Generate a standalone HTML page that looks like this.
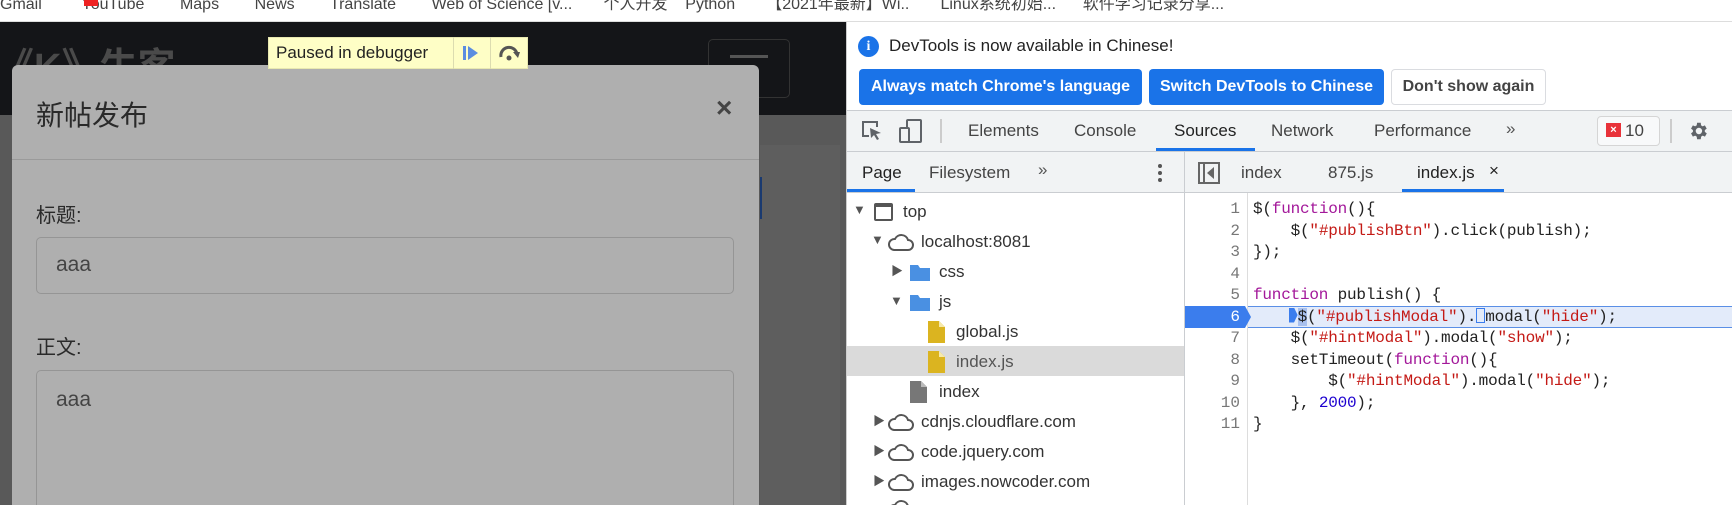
<!DOCTYPE html>
<html style="overflow:hidden;height:505px"><head><meta charset="utf-8">
<style>
*{box-sizing:border-box;margin:0;padding:0}
body{width:1732px;height:505px;overflow:hidden;position:relative;background:#fff;font-family:"Liberation Sans","Noto Sans CJK SC",sans-serif}
.a{position:absolute}
.t{position:absolute;white-space:nowrap}
.dt{font-size:17px;color:#333}
.code{font-family:"Liberation Mono",monospace;font-size:16px;color:#222;letter-spacing:-0.2px}
.k{color:#a3189a}.s{color:#c41a16}.n{color:#1c00cf}
.ln{font-family:"Liberation Mono",monospace;font-size:16px;color:#777;text-align:right;width:40px}
</style></head><body>
<!-- bookmark bar -->
<div class="a" style="left:0;top:0;width:1732px;height:22px;background:#fff;border-bottom:1px solid #ddd"></div>
<div class="t" style="left:0;top:-10px;font-size:16px;color:#444">Gmail &nbsp;&nbsp;&nbsp;&nbsp;&nbsp;&nbsp;&nbsp; YouTube &nbsp;&nbsp;&nbsp;&nbsp;&nbsp;&nbsp; Maps &nbsp;&nbsp;&nbsp;&nbsp;&nbsp;&nbsp; News &nbsp;&nbsp;&nbsp;&nbsp;&nbsp;&nbsp; Translate &nbsp;&nbsp;&nbsp;&nbsp;&nbsp;&nbsp; Web of Science [v... &nbsp;&nbsp;&nbsp;&nbsp;&nbsp; 个人开发 &nbsp;&nbsp; Python &nbsp;&nbsp;&nbsp;&nbsp;&nbsp; 【2021年最新】Wi.. &nbsp;&nbsp;&nbsp;&nbsp;&nbsp; Linux系统初始... &nbsp;&nbsp;&nbsp;&nbsp; 软件学习记录分享...</div>
<div class="a" style="left:84px;top:0;width:14px;height:6px;background:#e22"></div>

<!-- left page -->
<div class="a" style="left:0;top:22px;width:846px;height:483px;background:#595959"></div>
<div class="a" style="left:0;top:22px;width:846px;height:93px;background:#141518"></div>
<div class="t" style="left:-4px;top:36px;font-size:38px;color:#4a4a4a;font-weight:bold">《K》牛客</div>
<div class="a" style="left:708px;top:39px;width:82px;height:59px;border:1px solid #333;border-radius:5px"></div>
<div class="a" style="left:730px;top:55px;width:38px;height:3px;background:#555"></div>
<div class="a" style="left:760px;top:145px;width:80px;height:360px;background:#5e5e5e"></div>
<div class="a" style="left:760px;top:177px;width:2px;height:42px;background:#1a3a70"></div>
<!-- modal -->
<div class="a" style="left:12px;top:65px;width:747px;height:440px;background:#afafaf;border-radius:6px 6px 0 0"></div>
<div class="a" style="left:12px;top:159px;width:747px;height:1px;background:#9a9a9a"></div>
<div class="t" style="left:36px;top:94px;font-size:28px;color:#2a2a2a">新帖发布</div>
<div class="t" style="left:716px;top:92px;font-size:28px;font-weight:bold;color:#444">×</div>
<div class="t" style="left:36px;top:199px;font-size:20px;color:#2a2a2a">标题:</div>
<div class="a" style="left:36px;top:237px;width:698px;height:57px;border:1px solid #959595;border-radius:5px"></div>
<div class="t" style="left:56px;top:253px;font-size:21px;color:#444">aaa</div>
<div class="t" style="left:36px;top:331px;font-size:20px;color:#2a2a2a">正文:</div>
<div class="a" style="left:36px;top:370px;width:698px;height:135px;border:1px solid #959595;border-bottom:none;border-radius:5px 5px 0 0"></div>
<div class="t" style="left:56px;top:388px;font-size:21px;color:#444">aaa</div>
<!-- paused -->
<div class="a" style="left:268px;top:37px;width:260px;height:32px;background:#fefec6;border:1px solid #e8e8b0"></div>
<div class="t" style="left:276px;top:43px;font-size:17px;color:#222">Paused in debugger</div>
<div class="a" style="left:453px;top:37px;width:1px;height:32px;background:#dcdcb0"></div>
<div class="a" style="left:490px;top:37px;width:1px;height:32px;background:#dcdcb0"></div>
<div class="a" style="left:463px;top:46px;width:3px;height:14px;background:#5b8de0"></div>
<div class="a" style="left:468px;top:46px;width:0;height:0;border-top:7px solid transparent;border-bottom:7px solid transparent;border-left:10px solid #5b8de0"></div>
<svg class="a" style="left:497px;top:43px" width="26" height="20" viewBox="0 0 26 20"><path d="M4 14 A8 8 0 0 1 20 11" fill="none" stroke="#555" stroke-width="3"/><path d="M16 9 L23 9 L21 15 Z" fill="#555"/><circle cx="12" cy="15" r="2.5" fill="#555"/></svg>

<!-- devtools -->
<div class="a" style="left:846px;top:22px;width:886px;height:483px;background:#fff;border-left:1px solid #ccc"></div>
<div class="a" style="left:858px;top:36px;width:21px;height:21px;border-radius:50%;background:#1a73e8;color:#fff;font-size:14px;font-weight:bold;text-align:center;line-height:21px;font-family:'Liberation Serif',serif">i</div>
<div class="t dt" style="left:889px;top:36px;color:#222">DevTools is now available in Chinese!</div>
<div class="a" style="left:859px;top:69px;width:283px;height:36px;background:#1a73e8;border-radius:4px;color:#fff;font-weight:bold;font-size:16px;line-height:36px;text-align:center">Always match Chrome's language</div>
<div class="a" style="left:1149px;top:69px;width:235px;height:36px;background:#1a73e8;border-radius:4px;color:#fff;font-weight:bold;font-size:16px;line-height:36px;text-align:center">Switch DevTools to Chinese</div>
<div class="a" style="left:1391px;top:69px;width:155px;height:36px;background:#fff;border:1px solid #dadce0;border-radius:4px;color:#444;font-weight:bold;font-size:16px;line-height:34px;text-align:center">Don't show again</div>

<div class="a" style="left:847px;top:110px;width:885px;height:82px;background:#f1f3f4;border-top:1px solid #cacdd1"></div>
<div class="a" style="left:847px;top:151px;width:885px;height:1px;background:#cacdd1"></div>
<div class="a" style="left:847px;top:192px;width:885px;height:1px;background:#cacdd1"></div>
<!-- toolbar icons -->
<svg class="a" style="left:861px;top:120px" width="24" height="22" viewBox="0 0 24 22"><path d="M8 16 H2 V2 H16 V7" fill="none" stroke="#5f6368" stroke-width="2"/><path d="M9 8 L20 13 L15 14 L18 19 L16 20 L13 15 L10 18 Z" fill="#5f6368"/></svg>
<svg class="a" style="left:899px;top:119px" width="24" height="24" viewBox="0 0 24 24"><rect x="8" y="1" width="14" height="22" rx="1" fill="none" stroke="#5f6368" stroke-width="2"/><rect x="1" y="9" width="9" height="14" rx="1" fill="#f1f3f4" stroke="#5f6368" stroke-width="2"/></svg>
<div class="a" style="left:940px;top:119px;width:2px;height:24px;background:#ccc"></div>
<div class="t dt" style="left:968px;top:121px;color:#444">Elements</div>
<div class="t dt" style="left:1074px;top:121px;color:#444">Console</div>
<div class="t dt" style="left:1174px;top:121px;color:#222">Sources</div>
<div class="a" style="left:1156px;top:148px;width:99px;height:3px;background:#1a73e8"></div>
<div class="t dt" style="left:1271px;top:121px;color:#444">Network</div>
<div class="t dt" style="left:1374px;top:121px;color:#444">Performance</div>
<div class="t dt" style="left:1506px;top:119px;color:#555">»</div>
<div class="a" style="left:1597px;top:116px;width:63px;height:30px;border:1px solid #d5d5d5;border-radius:4px;background:#f8f9fa"></div>
<div class="a" style="left:1606px;top:123px;width:15px;height:14px;background:#e8323a;color:#fff;font-size:11px;font-weight:bold;text-align:center;line-height:14px">×</div>
<div class="t dt" style="left:1625px;top:121px;color:#444">10</div>
<div class="a" style="left:1670px;top:119px;width:2px;height:24px;background:#ccc"></div>
<svg class="a" style="left:1687px;top:120px" width="22" height="22" viewBox="0 0 24 24"><path fill="#5f6368" d="M19.4 13a7.5 7.5 0 0 0 0-2l2.1-1.6-2-3.5-2.5 1a7.6 7.6 0 0 0-1.7-1L15 3h-4l-.4 2.9a7.6 7.6 0 0 0-1.7 1l-2.5-1-2 3.5L6.5 11a7.5 7.5 0 0 0 0 2l-2.1 1.6 2 3.5 2.5-1a7.6 7.6 0 0 0 1.7 1L11 21h4l.4-2.9a7.6 7.6 0 0 0 1.7-1l2.5 1 2-3.5zM13 15.5a3.5 3.5 0 1 1 0-7 3.5 3.5 0 0 1 0 7z"/></svg>
<!-- second row -->
<div class="t dt" style="left:862px;top:163px;color:#222">Page</div>
<div class="a" style="left:847px;top:189px;width:68px;height:3px;background:#1a73e8"></div>
<div class="t dt" style="left:929px;top:163px;color:#444">Filesystem</div>
<div class="t dt" style="left:1038px;top:160px;color:#555">»</div>
<div class="a" style="left:1158px;top:164px;width:4px;height:4px;border-radius:50%;background:#555;box-shadow:0 7px 0 #555,0 14px 0 #555"></div>
<div class="a" style="left:1184px;top:152px;width:1px;height:353px;background:#cacdd1"></div>
<div class="a" style="left:1198px;top:162px;width:22px;height:22px;border:2px solid #666"></div>
<div class="a" style="left:1203px;top:164px;width:2px;height:18px;background:#666"></div>
<div class="a" style="left:1207px;top:167px;width:0;height:0;border-top:6px solid transparent;border-bottom:6px solid transparent;border-right:7px solid #666"></div>
<div class="t dt" style="left:1241px;top:163px;color:#444">index</div>
<div class="t dt" style="left:1328px;top:163px;color:#444">875.js</div>
<div class="t dt" style="left:1417px;top:163px;color:#222">index.js</div>
<div class="t dt" style="left:1489px;top:161px;color:#222">×</div>
<div class="a" style="left:1402px;top:189px;width:102px;height:3px;background:#1a73e8"></div>

<!-- tree -->
<div class="a" style="left:847px;top:346px;width:337px;height:30px;background:#dadada"></div>
<div class="t dt" style="left:853px;top:202px;font-size:13px;color:#555">▼</div>
<div class="a" style="left:874px;top:203px;width:19px;height:18px;border:2px solid #555;border-top-width:4px;border-radius:2px"></div>
<div class="t dt" style="left:903px;top:202px">top</div>
<div class="t dt" style="left:871px;top:232px;font-size:13px;color:#555">▼</div>
<svg class="a" style="left:888px;top:232px" width="26" height="20" viewBox="0 0 26 20"><path d="M6 18 H20 A5 5 0 0 0 20 8 A7 7 0 0 0 7 7 A5.5 5.5 0 0 0 6 18 Z" fill="none" stroke="#555" stroke-width="2"/></svg>
<div class="t dt" style="left:921px;top:232px">localhost:8081</div>
<div class="t dt" style="left:891px;top:262px;font-size:12px;color:#555">▶</div>
<svg class="a" style="left:910px;top:263px" width="20" height="18"><path d="M0 2 H8 L10 5 H20 V18 H0 Z" fill="#4a90e2"/></svg>
<div class="t dt" style="left:939px;top:262px">css</div>
<div class="t dt" style="left:890px;top:293px;font-size:13px;color:#555">▼</div>
<svg class="a" style="left:910px;top:293px" width="20" height="18"><path d="M0 2 H8 L10 5 H20 V18 H0 Z" fill="#4a90e2"/></svg>
<div class="t dt" style="left:939px;top:292px">js</div>
<svg class="a" style="left:928px;top:321px" width="18" height="22"><path d="M0 0 H11 L17 6 V22 H0 Z" fill="#dbb420"/><path d="M11 0 V6 H17" fill="#f6e9a8"/></svg>
<div class="t dt" style="left:956px;top:322px">global.js</div>
<svg class="a" style="left:928px;top:351px" width="18" height="22"><path d="M0 0 H11 L17 6 V22 H0 Z" fill="#dbb420"/><path d="M11 0 V6 H17" fill="#f6e9a8"/></svg>
<div class="t dt" style="left:956px;top:352px;color:#555">index.js</div>
<svg class="a" style="left:910px;top:381px" width="18" height="22"><path d="M0 0 H11 L17 6 V22 H0 Z" fill="#777"/><path d="M11 0 V6 H17" fill="#bbb"/></svg>
<div class="t dt" style="left:939px;top:382px">index</div>
<div class="t dt" style="left:873px;top:412px;font-size:12px;color:#555">▶</div>
<svg class="a" style="left:888px;top:412px" width="26" height="20" viewBox="0 0 26 20"><path d="M6 18 H20 A5 5 0 0 0 20 8 A7 7 0 0 0 7 7 A5.5 5.5 0 0 0 6 18 Z" fill="none" stroke="#555" stroke-width="2"/></svg>
<div class="t dt" style="left:921px;top:412px">cdnjs.cloudflare.com</div>
<div class="t dt" style="left:873px;top:442px;font-size:12px;color:#555">▶</div>
<svg class="a" style="left:888px;top:442px" width="26" height="20" viewBox="0 0 26 20"><path d="M6 18 H20 A5 5 0 0 0 20 8 A7 7 0 0 0 7 7 A5.5 5.5 0 0 0 6 18 Z" fill="none" stroke="#555" stroke-width="2"/></svg>
<div class="t dt" style="left:921px;top:442px">code.jquery.com</div>
<div class="t dt" style="left:873px;top:472px;font-size:12px;color:#555">▶</div>
<svg class="a" style="left:888px;top:472px" width="26" height="20" viewBox="0 0 26 20"><path d="M6 18 H20 A5 5 0 0 0 20 8 A7 7 0 0 0 7 7 A5.5 5.5 0 0 0 6 18 Z" fill="none" stroke="#555" stroke-width="2"/></svg>
<div class="t dt" style="left:921px;top:472px">images.nowcoder.com</div>
<svg class="a" style="left:888px;top:498px" width="26" height="7" viewBox="0 0 26 7"><path d="M6 18 H20 A5 5 0 0 0 20 8 A7 7 0 0 0 7 7 A5.5 5.5 0 0 0 6 18 Z" fill="none" stroke="#555" stroke-width="2"/></svg>

<!-- code -->
<div class="a" style="left:1247px;top:193px;width:1px;height:312px;background:#ddd"></div>
<div class="a" style="left:1248px;top:306px;width:484px;height:22px;background:#e3ebfa;border-top:1px solid #5a8fe6;border-bottom:1px solid #5a8fe6"></div>
<svg class="a" style="left:1185px;top:306px" width="68" height="22"><path d="M0 0 H60 L66 11 L60 22 H0 Z" fill="#3b7ded"/></svg>
<div class="ln t" style="left:1200px;top:199px;line-height:21.5px;white-space:pre">1
2
3
4
5
<span style="color:#fff">6</span>
7
8
9
10
11</div>
<div class="code t" style="left:1253px;top:199px;line-height:21.5px;white-space:pre">$(<span class="k">function</span>(){
    $(<span class="s">"#publishBtn"</span>).click(publish);
});

<span class="k">function</span> publish() {
    <span style="display:inline-block;width:9px;height:15px;background:#3b7ded;vertical-align:-2px;margin-left:-2px;clip-path:polygon(0 0,60% 0,100% 50%,60% 100%,0 100%)"></span><span style="background:#a8c0ee">$</span>(<span class="s">"#publishModal"</span>).<span style="display:inline-block;width:9px;height:15px;border:1px solid #3b7ded;vertical-align:-2px"></span>modal(<span class="s">"hide"</span>);
    $(<span class="s">"#hintModal"</span>).modal(<span class="s">"show"</span>);
    setTimeout(<span class="k">function</span>(){
        $(<span class="s">"#hintModal"</span>).modal(<span class="s">"hide"</span>);
    }, <span class="n">2000</span>);
}</div>
</body></html>
